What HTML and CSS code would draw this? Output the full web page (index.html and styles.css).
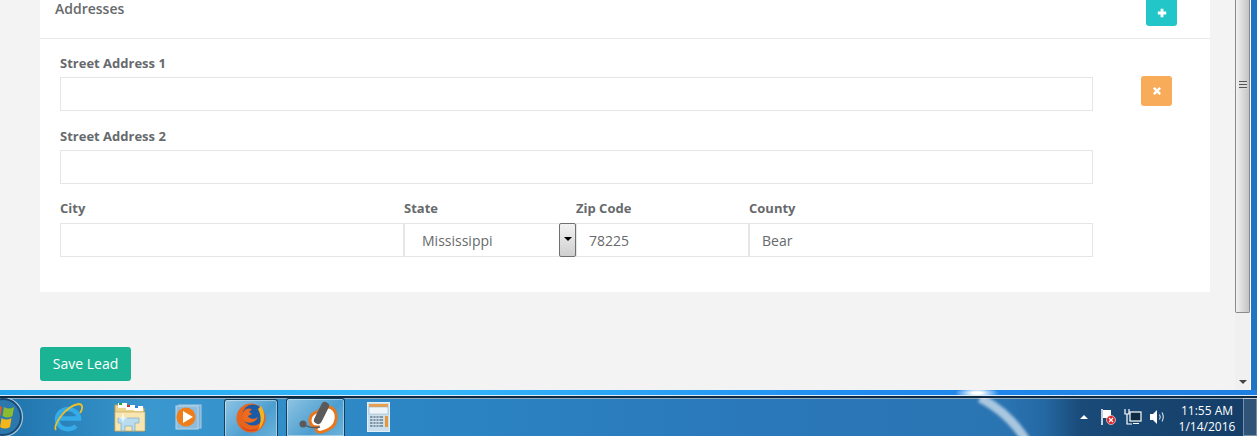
FILE: index.html
```html
<!DOCTYPE html>
<html lang="en">
<head>
    <meta charset="UTF-8">
    <meta name="viewport" content="width=device-width, initial-scale=1.0">
    <title>Save Lead</title>
    <link rel="stylesheet" href="styles.css">
</head>
<body>
    <div class="window">
        <div class="page">
            <div class="card">
                <div class="card-head">
                    <h2>Addresses</h2>
                    <button class="btn-add" aria-label="Add address">
                        <svg width="10" height="10" viewBox="0 0 10 10"><path d="M3.600 .8h2.800v2.800h2.800v2.800H6.400v2.800H3.600V6.400H.8V3.600h2.800z" fill="#fff"/></svg>
                    </button>
                </div>
                <div class="card-body">
                    <div class="fields">
                        <label class="field">
                            <span>Street Address 1</span>
                            <input type="text">
                        </label>
                        <label class="field">
                            <span>Street Address 2</span>
                            <input type="text">
                        </label>
                        <div class="field-row">
                            <label class="field">
                                <span>City</span>
                                <input type="text">
                            </label>
                            <div class="field">
                                <span>State</span>
                                <div class="select">
                                    <span class="select-value">Mississippi</span>
                                    <span class="select-arrow"></span>
                                </div>
                            </div>
                            <label class="field">
                                <span>Zip Code</span>
                                <input type="text" value="78225">
                            </label>
                            <label class="field">
                                <span>County</span>
                                <input type="text" value="Bear">
                            </label>
                        </div>
                    </div>
                    <button class="btn-remove" aria-label="Remove address">
                        <svg width="10" height="10" viewBox="0 0 10 10"><path d="M2.700 1l2.300 2.300L7.300 1 9 2.700 6.700 5 9 7.300 7.300 9 5 6.700 2.700 9 1 7.300 3.300 5 1 2.700z" fill="#fff"/></svg>
                    </button>
                </div>
            </div>
            <button class="btn-save">Save Lead</button>
        </div>
        <div class="scrollbar">
            <div class="scroll-thumb"><span class="grip"></span></div>
            <div class="scroll-track"><span class="scroll-down"></span></div>
        </div>
    </div>
    <div class="window-edge"></div>

    <div class="taskbar">
        <div class="slot slot-start">
            <svg class="orb" width="42" height="42" viewBox="0 0 42 42">
                <circle cx="21" cy="21" r="19.500" fill="#174a74" stroke="#a9c8dd" stroke-width="1.200"/>
                <circle cx="21" cy="21" r="17" fill="#2b78ac"/>
                <path d="M11 11q5-3 9 0l-1.500 9q-4-3-9 0z" fill="#e8562a"/>
                <path d="M22 11q5 3 10 0l-1.500 9q-5 3-10 0z" fill="#8bbb2e"/>
                <path d="M8.500 22q5-3 9 0L16 31q-4-3-9 0z" fill="#2f8fd8"/>
                <path d="M19.500 22q5 3 10 0L28 31q-5 3-10 0z" fill="#f3b71b"/>
            </svg>
        </div>
        <div class="slot slot-ie">
            <svg width="30" height="30" viewBox="0 0 30 30">
                <path d="M6 16.500h20a11 10 0 1 0-3 7.500" fill="none" stroke="#35ace8" stroke-width="4.500"/>
                <path d="M3 28C-1 23 14 3 26 2c4 0 4 5 1 9" fill="none" stroke="#ecc02a" stroke-width="1.800"/>
            </svg>
        </div>
        <div class="slot">
            <svg width="34" height="30" viewBox="0 0 34 30">
                <path d="M2 3h11l2 3h16v23H2z" fill="#ecd48c" stroke="#bfa260"/>
                <rect x="5" y="1" width="9" height="5" fill="#fff"/><rect x="6" y="1" width="3" height="2" fill="#2aa53a"/>
                <rect x="13" y="3" width="9" height="5" fill="#fff"/><rect x="14" y="3" width="3" height="2" fill="#c8392b"/>
                <rect x="21" y="4" width="9" height="5" fill="#fff"/><rect x="22" y="4" width="3" height="2" fill="#2c82d3"/>
                <path d="M2 10h30v19H2z" fill="#f8e6b0" stroke="#bfa260" stroke-width=".6"/>
                <path d="M5 16h21v5h-4v8h-3v-5h-7v5H8v-8H5z" fill="#b9dcef" stroke="#7fa9c4" stroke-width=".7"/>
                <path d="M10 10l1 5 4 1-4 1-1 4-1-4-4-1 4-1z" fill="#fff" fill-opacity=".8"/>
            </svg>
        </div>
        <div class="slot">
            <svg width="28" height="26" viewBox="0 0 28 26">
                <rect x="4" y="1" width="22" height="23" fill="#7fb2d6" stroke="#a9cde5"/>
                <rect x="1" y="2" width="22" height="23" fill="#8dbcdd" stroke="#b7d6ea"/>
                <circle cx="11" cy="13" r="9.500" fill="#ef7d1a"/>
                <path d="M8 7l10 6-10 6z" fill="#fff"/>
            </svg>
        </div>
        <div class="task-btn task-firefox">
            <svg width="32" height="32" viewBox="0 0 32 32">
                <circle cx="16" cy="16" r="14.500" fill="#e8641c"/>
                <circle cx="18" cy="13" r="10.500" fill="#1d5aa6"/>
                <path d="M26 4c5 7 4 18-3 24 3-6 4-14 0-21z" fill="#f3b51f"/>
                <path d="M9 9c2-3 5-3 8-2l-3 3 3 2-4 2c1 3 6 4 10 1-2 5-8 7-12 5-4-2-5-7-2-11z" fill="#ee6a1c"/>
                <path d="M5 22c4 6 13 8 20 3-5 6-16 6-20-3z" fill="#d8401c"/>
            </svg>
        </div>
        <div class="task-btn task-zune">
            <svg width="44" height="36" viewBox="0 0 44 36">
                <path d="M16 20c0-6 6-8 8-8 3-6 12-7 16-2 4 5 2 14-2 17-3 2-5 4-10 5-3 1-8-1-5-5-4 0-7-2-7-7z" fill="#fff" stroke="#e8761e" stroke-width="3"/>
                <path d="M31 6l-7 14" stroke="#5a5a5a" stroke-width="8" stroke-linecap="round"/>
                <path d="M9 24q7 5 17 3" fill="none" stroke="#5a5a5a" stroke-width="1.500"/>
                <circle cx="9" cy="24" r="3.500" fill="#5a5a5a"/>
            </svg>
        </div>
        <div class="slot">
            <svg width="24" height="30" viewBox="0 0 24 30">
                <rect x=".5" y=".5" width="22" height="29" fill="#c9dfee" stroke="#e3eff7"/>
                <rect x="2" y="2" width="19" height="3" fill="#e8a04a"/>
                <rect x="2" y="5" width="19" height="7" fill="#eef5fa" stroke="#93a9b9" stroke-width=".5"/>
                <path d="M3 14h13v2H3zm0 3h13v2H3zm0 3h13v2H3zm0 3h13v2H3z" fill="#8095a6"/>
                <path d="M6 13v13M9 13v13M12 13v13" stroke="#dbe8f1" stroke-width=".8"/>
                <rect x="18" y="14" width="3" height="11" fill="#e8963a"/>
            </svg>
        </div>
        <svg class="streak" width="70" height="40" viewBox="0 0 70 40">
            <defs><filter id="soft"><feGaussianBlur stdDeviation="1.500"/></filter></defs>
            <path d="M10 0Q38 14 56 42" fill="none" stroke="#fff" stroke-opacity=".6" stroke-width="9" filter="url(#soft)"/>
        </svg>
        <div class="tray">
            <span class="tray-up"></span>
            <svg width="18" height="18" viewBox="0 0 18 18">
                <path d="M3 1v16" stroke="#fff" stroke-width="1.500"/>
                <path d="M4 2h8v8H4z" fill="#fff"/>
                <circle cx="12" cy="12" r="4.500" fill="#d8262c" stroke="#fff" stroke-width=".6"/>
                <path d="M10 10l4 4m0-4l-4 4" stroke="#fff" stroke-width="1.200"/>
            </svg>
            <svg width="18" height="18" viewBox="0 0 18 18">
                <rect x="6" y="4" width="11" height="9" fill="#0d2b44" stroke="#fff" stroke-width="1.200"/>
                <path d="M9 15.500h6M1 1v5h4V1M3 6v10h5" fill="none" stroke="#fff" stroke-width="1.200"/>
            </svg>
            <svg width="18" height="18" viewBox="0 0 18 18">
                <path d="M1 6h3l4-4v14l-4-4H1z" fill="#fff"/>
                <path d="M10.500 6.500q1.500 2.500 0 5M13 4.500q2.500 4.500 0 9" fill="none" stroke="#d5e3ee" stroke-width="1.100"/>
            </svg>
            <div class="clock">
                <span>11:55 AM</span>
                <span>1/14/2016</span>
            </div>
            <div class="show-desktop"></div>
        </div>
    </div>
</body>
</html>
```

FILE: styles.css
```css
* {
    box-sizing: border-box;
}
html, body {
    margin: 0;
    padding: 0;
    height: 436px;
    overflow: hidden;
}
body {
    font-family: 'Open Sans', sans-serif;
    background-color: #f3f3f3;
    color: #676a6c;
    display: flex;
    flex-direction: column;
}

/* Browser window */
.window {
    height: 390px;
    display: flex;
    flex: none;
    border-right: 6px solid #1f74c4;
    background-color: #f3f3f3;
}
.window-edge {
    height: 6px;
    flex: none;
    border-bottom: 1px solid #dcebf5;
    background:
        radial-gradient(ellipse 22px 6px at 977px 3px, #fff 20%, rgba(255, 255, 255, 0) 100%),
        linear-gradient(90deg, #24a6ee 0, #33b8fb 33%, #1f8af0 70%, #1d7fe0 100%);
}
.page {
    flex: 1;
    min-width: 0;
    padding: 0 25px 0 40px;
}
.card {
    background-color: #fff;
    height: 292px;
}
.card-head {
    height: 39px;
    padding: 0 33px 0 15px;
    border-bottom: 1px solid #e7eaec;
    display: flex;
    justify-content: space-between;
    align-items: flex-start;
}
.card-head h2 {
    margin: 1px 0 0;
    font-size: 14px;
    font-weight: 600;
    line-height: 16px;
    color: #676a6c;
}
.btn-add, .btn-remove {
    border: none;
    padding: 0;
    display: flex;
    align-items: center;
    justify-content: center;
    width: 31px;
}
.btn-add {
    height: 26px;
    background-color: #23c6c8;
    border-radius: 0 0 3px 3px;
}
.btn-remove {
    height: 30px;
    margin-top: 37px;
    background-color: #f8ac59;
    border-radius: 3px;
}
.card-body {
    display: flex;
    padding: 0 38px 0 20px;
    gap: 48px;
}
.fields {
    width: 1033px;
    padding-top: 15px;
}
.field {
    display: block;
    min-width: 0;
    margin-bottom: 16px;
}
.field > span {
    display: block;
    font-size: 13px;
    font-weight: 700;
    line-height: 18px;
    margin-bottom: 5px;
}
.field input, .select {
    display: block;
    width: 100%;
    height: 34px;
    border: 1px solid #e5e6e7;
    background-color: #fff;
    padding: 6px 12px;
    font-family: 'Open Sans', sans-serif;
    font-size: 14px;
    color: #676a6c;
}
.field-row {
    display: grid;
    grid-template-columns: 344px 172px 173px 344px;
}
.field-row .field {
    margin-bottom: 0;
}
.field-row .field > span {
    margin-top: -1px;
    margin-bottom: 6px;
}
.select {
    display: flex;
    align-items: center;
    padding: 0 0 0 17px;
}
.select-value {
    flex: 1;
}
.select-arrow {
    width: 17px;
    height: 34px;
    margin-right: -1px;
    border: 1px solid #707070;
    border-radius: 2px;
    background: linear-gradient(#f2f2f2, #cfcfcf);
    position: relative;
}
.select-arrow::after {
    content: "";
    position: absolute;
    left: 4px;
    top: 13px;
    border-left: 4px solid transparent;
    border-right: 4px solid transparent;
    border-top: 4px solid #000;
}
.btn-save {
    display: block;
    margin-top: 55px;
    padding: 0 0 2px;
    width: 91px;
    height: 34px;
    border: none;
    border-radius: 3px;
    background-color: #1ab394;
    color: #fff;
    font-family: 'Open Sans', sans-serif;
    font-size: 14px;
}

/* Browser scrollbar */
.scrollbar {
    width: 16px;
    flex: none;
    display: flex;
    flex-direction: column;
    background-color: #f0f0f0;
    border-right: 1px solid #fff;
}
.scroll-thumb {
    height: 313px;
    border: 1px solid #8a8a8a;
    border-top: none;
    border-radius: 0 0 2px 2px;
    background: linear-gradient(90deg, #f2f2f2, #d8d8d8 55%, #c4c4c4);
    position: relative;
}
.grip {
    position: absolute;
    left: 3px;
    top: 81px;
    width: 8px;
    height: 8px;
    background: repeating-linear-gradient(#555 0 1px, #ddd 1px 3px);
}
.scroll-track {
    flex: 1;
    position: relative;
}
.scroll-down {
    position: absolute;
    left: 4px;
    bottom: 6px;
    border-left: 4px solid transparent;
    border-right: 4px solid transparent;
    border-top: 4px solid #444;
}

/* Windows taskbar */
.taskbar {
    flex: 1;
    display: flex;
    align-items: center;
    position: relative;
    overflow: hidden;
    border-top: 2px solid #0e2a42;
    box-shadow: inset 0 1px 0 #8fa9bb;
    background: linear-gradient(90deg, #1f72ab 0, #3a98cf 12%, #2c87c4 30%, #2a78ba 60%, #2a74b2 80%, #2469a4 83%, #1a4a78 86%, #143d66 100%);
}
.slot {
    width: 59px;
    height: 38px;
    flex: none;
    display: flex;
    align-items: center;
    justify-content: center;
}
.slot-start {
    width: 38px;
    justify-content: flex-start;
}
.orb {
    flex: none;
    margin-left: -18px;
}
.slot-ie {
    margin-right: 3px;
}
.task-btn {
    height: 38px;
    margin-top: 1px;
    flex: none;
    display: flex;
    align-items: center;
    justify-content: center;
    border: 1px solid #14405f;
    border-bottom: none;
    border-radius: 3px 3px 0 0;
    box-shadow: inset 0 0 0 1px rgba(255, 255, 255, 0.4);
    background: linear-gradient(135deg, #8fc4e3, #4c9ed0 60%, #6cb3da);
}
.task-firefox {
    width: 54px;
    margin-left: 6px;
}
.task-zune {
    width: 59px;
    margin: 0 4px 0 8px;
}
.streak {
    position: absolute;
    left: 970px;
    top: 0;
}
.tray {
    margin-left: auto;
    display: flex;
    align-items: center;
    height: 38px;
    gap: 7px;
    color: #fff;
}
.tray-up {
    width: 0;
    margin-right: 4px;
    border-left: 4px solid transparent;
    border-right: 4px solid transparent;
    border-bottom: 4px solid #fff;
}
.clock {
    width: 60px;
    margin: 3px -1px 0 3px;
    display: flex;
    flex-direction: column;
    align-items: center;
    font-size: 12px;
    line-height: 16px;
}
.show-desktop {
    width: 14px;
    height: 38px;
    border: 1px solid rgba(255, 255, 255, 0.35);
    background: rgba(255, 255, 255, 0.12);
}
```
